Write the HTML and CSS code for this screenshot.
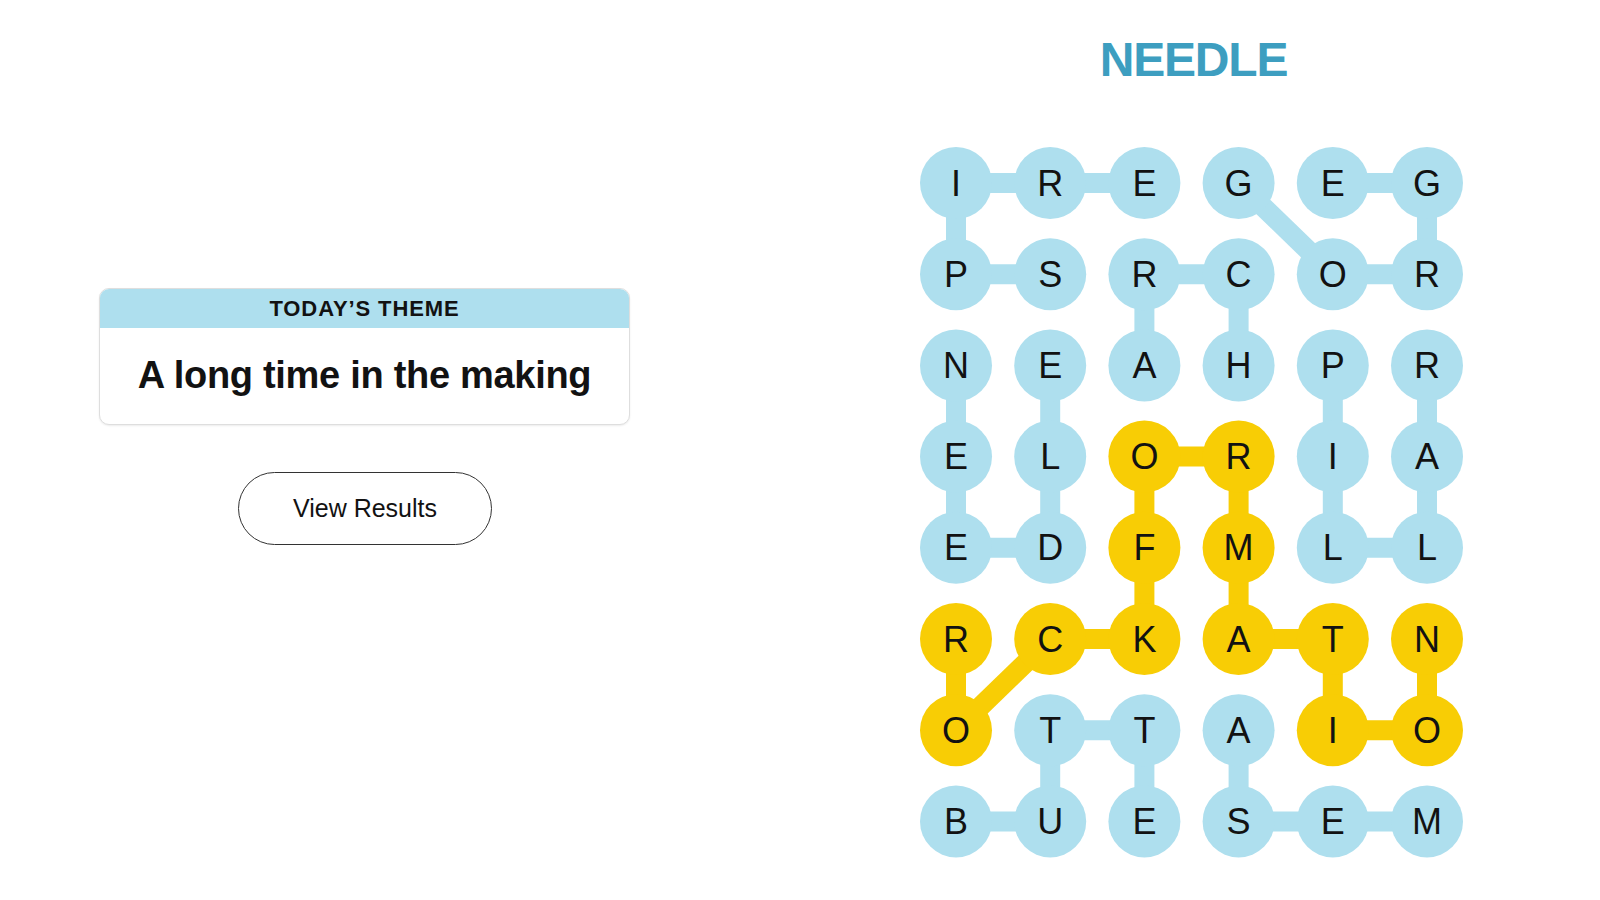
FILE: index.html
```html
<!DOCTYPE html>
<html lang="en">
<head>
<meta charset="utf-8">
<title>Strands</title>
<link rel="stylesheet" href="styles.css">
</head>
<body>
<main class="page">
  <section class="left">
    <div class="theme-card">
      <div class="theme-head">TODAY’S THEME</div>
      <div class="theme-body">A long time in the making</div>
    </div>
    <button class="results-btn">View Results</button>
  </section>
  <section class="right">
    <h1 class="word">NEEDLE</h1>
    <svg class="board" width="543" height="711" viewBox="0 0 543 711">
      <g class="lines blue">
        <line x1="36" y1="36" x2="130.2" y2="36"/>
        <line x1="130.2" y1="36" x2="224.4" y2="36"/>
        <line x1="36" y1="36" x2="36" y2="127.2"/>
        <line x1="318.6" y1="36" x2="412.8" y2="127.2"/>
        <line x1="412.8" y1="36" x2="507" y2="36"/>
        <line x1="507" y1="36" x2="507" y2="127.2"/>
        <line x1="36" y1="127.2" x2="130.2" y2="127.2"/>
        <line x1="224.4" y1="127.2" x2="318.6" y2="127.2"/>
        <line x1="412.8" y1="127.2" x2="507" y2="127.2"/>
        <line x1="224.4" y1="127.2" x2="224.4" y2="218.4"/>
        <line x1="318.6" y1="127.2" x2="318.6" y2="218.4"/>
        <line x1="36" y1="218.4" x2="36" y2="309.6"/>
        <line x1="130.2" y1="218.4" x2="130.2" y2="309.6"/>
        <line x1="412.8" y1="218.4" x2="412.8" y2="309.6"/>
        <line x1="507" y1="218.4" x2="507" y2="309.6"/>
        <line x1="36" y1="309.6" x2="36" y2="400.8"/>
        <line x1="130.2" y1="309.6" x2="130.2" y2="400.8"/>
        <line x1="412.8" y1="309.6" x2="412.8" y2="400.8"/>
        <line x1="507" y1="309.6" x2="507" y2="400.8"/>
        <line x1="36" y1="400.8" x2="130.2" y2="400.8"/>
        <line x1="412.8" y1="400.8" x2="507" y2="400.8"/>
        <line x1="130.2" y1="583.2" x2="224.4" y2="583.2"/>
        <line x1="130.2" y1="583.2" x2="130.2" y2="674.4"/>
        <line x1="224.4" y1="583.2" x2="224.4" y2="674.4"/>
        <line x1="318.6" y1="583.2" x2="318.6" y2="674.4"/>
        <line x1="36" y1="674.4" x2="130.2" y2="674.4"/>
        <line x1="318.6" y1="674.4" x2="412.8" y2="674.4"/>
        <line x1="412.8" y1="674.4" x2="507" y2="674.4"/>
      </g>
      <g class="lines yellow">
        <line x1="224.4" y1="309.6" x2="318.6" y2="309.6"/>
        <line x1="224.4" y1="309.6" x2="224.4" y2="400.8"/>
        <line x1="318.6" y1="309.6" x2="318.6" y2="400.8"/>
        <line x1="224.4" y1="400.8" x2="224.4" y2="492"/>
        <line x1="318.6" y1="400.8" x2="318.6" y2="492"/>
        <line x1="130.2" y1="492" x2="224.4" y2="492"/>
        <line x1="318.6" y1="492" x2="412.8" y2="492"/>
        <line x1="36" y1="492" x2="36" y2="583.2"/>
        <line x1="130.2" y1="492" x2="36" y2="583.2"/>
        <line x1="412.8" y1="492" x2="412.8" y2="583.2"/>
        <line x1="507" y1="492" x2="507" y2="583.2"/>
        <line x1="412.8" y1="583.2" x2="507" y2="583.2"/>
      </g>

      <g class="cell blue" transform="translate(36,36)"><circle r="36"/><text y="12.5">I</text></g>
      <g class="cell blue" transform="translate(130.2,36)"><circle r="36"/><text y="12.5">R</text></g>
      <g class="cell blue" transform="translate(224.4,36)"><circle r="36"/><text y="12.5">E</text></g>
      <g class="cell blue" transform="translate(318.6,36)"><circle r="36"/><text y="12.5">G</text></g>
      <g class="cell blue" transform="translate(412.8,36)"><circle r="36"/><text y="12.5">E</text></g>
      <g class="cell blue" transform="translate(507,36)"><circle r="36"/><text y="12.5">G</text></g>

      <g class="cell blue" transform="translate(36,127.2)"><circle r="36"/><text y="12.5">P</text></g>
      <g class="cell blue" transform="translate(130.2,127.2)"><circle r="36"/><text y="12.5">S</text></g>
      <g class="cell blue" transform="translate(224.4,127.2)"><circle r="36"/><text y="12.5">R</text></g>
      <g class="cell blue" transform="translate(318.6,127.2)"><circle r="36"/><text y="12.5">C</text></g>
      <g class="cell blue" transform="translate(412.8,127.2)"><circle r="36"/><text y="12.5">O</text></g>
      <g class="cell blue" transform="translate(507,127.2)"><circle r="36"/><text y="12.5">R</text></g>

      <g class="cell blue" transform="translate(36,218.4)"><circle r="36"/><text y="12.5">N</text></g>
      <g class="cell blue" transform="translate(130.2,218.4)"><circle r="36"/><text y="12.5">E</text></g>
      <g class="cell blue" transform="translate(224.4,218.4)"><circle r="36"/><text y="12.5">A</text></g>
      <g class="cell blue" transform="translate(318.6,218.4)"><circle r="36"/><text y="12.5">H</text></g>
      <g class="cell blue" transform="translate(412.8,218.4)"><circle r="36"/><text y="12.5">P</text></g>
      <g class="cell blue" transform="translate(507,218.4)"><circle r="36"/><text y="12.5">R</text></g>

      <g class="cell blue" transform="translate(36,309.6)"><circle r="36"/><text y="12.5">E</text></g>
      <g class="cell blue" transform="translate(130.2,309.6)"><circle r="36"/><text y="12.5">L</text></g>
      <g class="cell yellow" transform="translate(224.4,309.6)"><circle r="36"/><text y="12.5">O</text></g>
      <g class="cell yellow" transform="translate(318.6,309.6)"><circle r="36"/><text y="12.5">R</text></g>
      <g class="cell blue" transform="translate(412.8,309.6)"><circle r="36"/><text y="12.5">I</text></g>
      <g class="cell blue" transform="translate(507,309.6)"><circle r="36"/><text y="12.5">A</text></g>

      <g class="cell blue" transform="translate(36,400.8)"><circle r="36"/><text y="12.5">E</text></g>
      <g class="cell blue" transform="translate(130.2,400.8)"><circle r="36"/><text y="12.5">D</text></g>
      <g class="cell yellow" transform="translate(224.4,400.8)"><circle r="36"/><text y="12.5">F</text></g>
      <g class="cell yellow" transform="translate(318.6,400.8)"><circle r="36"/><text y="12.5">M</text></g>
      <g class="cell blue" transform="translate(412.8,400.8)"><circle r="36"/><text y="12.5">L</text></g>
      <g class="cell blue" transform="translate(507,400.8)"><circle r="36"/><text y="12.5">L</text></g>

      <g class="cell yellow" transform="translate(36,492)"><circle r="36"/><text y="12.5">R</text></g>
      <g class="cell yellow" transform="translate(130.2,492)"><circle r="36"/><text y="12.5">C</text></g>
      <g class="cell yellow" transform="translate(224.4,492)"><circle r="36"/><text y="12.5">K</text></g>
      <g class="cell yellow" transform="translate(318.6,492)"><circle r="36"/><text y="12.5">A</text></g>
      <g class="cell yellow" transform="translate(412.8,492)"><circle r="36"/><text y="12.5">T</text></g>
      <g class="cell yellow" transform="translate(507,492)"><circle r="36"/><text y="12.5">N</text></g>

      <g class="cell yellow" transform="translate(36,583.2)"><circle r="36"/><text y="12.5">O</text></g>
      <g class="cell blue" transform="translate(130.2,583.2)"><circle r="36"/><text y="12.5">T</text></g>
      <g class="cell blue" transform="translate(224.4,583.2)"><circle r="36"/><text y="12.5">T</text></g>
      <g class="cell blue" transform="translate(318.6,583.2)"><circle r="36"/><text y="12.5">A</text></g>
      <g class="cell yellow" transform="translate(412.8,583.2)"><circle r="36"/><text y="12.5">I</text></g>
      <g class="cell yellow" transform="translate(507,583.2)"><circle r="36"/><text y="12.5">O</text></g>

      <g class="cell blue" transform="translate(36,674.4)"><circle r="36"/><text y="12.5">B</text></g>
      <g class="cell blue" transform="translate(130.2,674.4)"><circle r="36"/><text y="12.5">U</text></g>
      <g class="cell blue" transform="translate(224.4,674.4)"><circle r="36"/><text y="12.5">E</text></g>
      <g class="cell blue" transform="translate(318.6,674.4)"><circle r="36"/><text y="12.5">S</text></g>
      <g class="cell blue" transform="translate(412.8,674.4)"><circle r="36"/><text y="12.5">E</text></g>
      <g class="cell blue" transform="translate(507,674.4)"><circle r="36"/><text y="12.5">M</text></g>
    </svg>
  </section>
</main>
</body>
</html>
```

FILE: styles.css
```css
html, body {
  margin: 0;
  padding: 0;
  background: #ffffff;
}

body {
  font-family: "Liberation Sans", Arial, sans-serif;
  color: #121212;
  width: 1600px;
  height: 900px;
  overflow: hidden;
}

.page {
  display: flex;
  width: 1600px;
  height: 900px;
}

.left {
  width: 729px;
  display: flex;
  flex-direction: column;
  align-items: center;
  padding-top: 288px;
  box-sizing: border-box;
}

.theme-card {
  width: 531px;
  box-sizing: border-box;
  border: 1px solid #dedede;
  border-radius: 10px;
  overflow: hidden;
  box-shadow: 0 1px 2px rgba(0, 0, 0, 0.08);
  background: #fff;
}

.theme-head {
  background: #aedfee;
  height: 39px;
  display: flex;
  align-items: center;
  justify-content: center;
  font-size: 22px;
  font-weight: 700;
  letter-spacing: 0.9px;
  color: #121212;
}

.theme-body {
  height: 96px;
  display: flex;
  align-items: center;
  justify-content: center;
  font-size: 38px;
  font-weight: 700;
  color: #121212;
  letter-spacing: -0.3px;
  padding-bottom: 2px;
  box-sizing: border-box;
}

.results-btn {
  margin-top: 47px;
  width: 254px;
  height: 73px;
  border: 1.5px solid #333;
  border-radius: 37px;
  background: #fff;
  font-family: "Liberation Sans", Arial, sans-serif;
  font-size: 25px;
  color: #121212;
  padding: 0 0 0 1px;
}

.right {
  width: 817px;
  margin-left: 54px;
  display: flex;
  flex-direction: column;
  align-items: center;
  padding-top: 36px;
  box-sizing: border-box;
}

.word {
  margin: 0 0 0 4px;
  font-size: 48px;
  line-height: 48px;
  font-weight: 700;
  color: #3d9ec0;
  letter-spacing: -1.2px;
}

.board {
  display: block;
  margin-top: 63px;
}

.lines line {
  stroke-width: 20;
  stroke-linecap: butt;
}

.lines.blue line {
  stroke: #aedfee;
}

.lines.yellow line {
  stroke: #f8cd05;
}

.cell.blue circle {
  fill: #aedfee;
}

.cell.yellow circle {
  fill: #f8cd05;
}

.cell text {
  font-family: "Liberation Sans", Arial, sans-serif;
  font-size: 36px;
  fill: #121212;
  text-anchor: middle;
}
```
